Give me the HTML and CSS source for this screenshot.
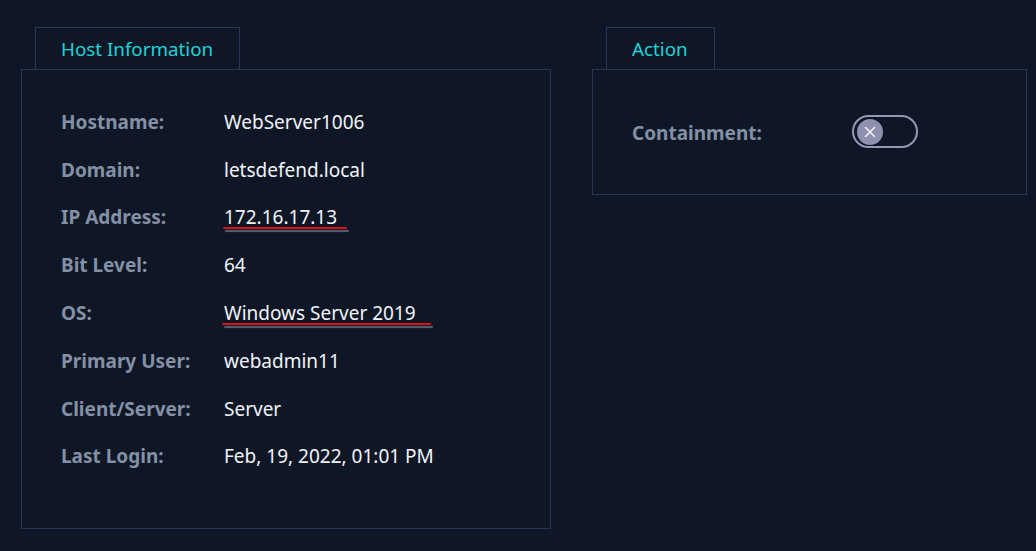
FILE: index.html
```html
<!DOCTYPE html>
<html>
<head>
<meta charset="utf-8">
<link rel="stylesheet" href="styles.css">
</head>
<body>
<div class="page">
  <section class="card card-host">
    <div class="tab">Host Information</div>
    <div class="panel panel-host">
      <div class="row"><span class="label">Hostname:</span><span class="value">WebServer1006</span></div>
      <div class="row"><span class="label">Domain:</span><span class="value">letsdefend.local</span></div>
      <div class="row"><span class="label">IP Address:</span><span class="value"><span class="mark mark-ip">172.16.17.13</span></span></div>
      <div class="row"><span class="label">Bit Level:</span><span class="value">64</span></div>
      <div class="row"><span class="label">OS:</span><span class="value"><span class="mark mark-os">Windows Server 2019</span></span></div>
      <div class="row"><span class="label">Primary User:</span><span class="value">webadmin11</span></div>
      <div class="row"><span class="label">Client/Server:</span><span class="value">Server</span></div>
      <div class="row"><span class="label">Last Login:</span><span class="value">Feb, 19, 2022, 01:01 PM</span></div>
    </div>
  </section>
  <section class="card card-action">
    <div class="tab tab-action">Action</div>
    <div class="panel panel-action">
      <div class="action-row">
        <span class="label label-action">Containment:</span>
        <span class="toggle"><span class="knob"><svg width="14" height="14" viewBox="0 0 14 14"><path d="M2.5 2.5 L11.5 11.5 M11.5 2.5 L2.5 11.5" stroke="#eef0f6" stroke-width="1.6" stroke-linecap="round" fill="none"/></svg></span></span>
      </div>
    </div>
  </section>
</div>
</body>
</html>
```
FILE: styles.css
```css
html, body {
  margin: 0;
  padding: 0;
  background: #0f1726;
  height: 100%;
}
body {
  font-family: "Noto Sans", "Open Sans", sans-serif;
  color: #eef1f5;
}
.page {
  display: flex;
  gap: 41px;
  padding: 27px 0 0 21px;
  align-items: flex-start;
}
.card {
  display: flex;
  flex-direction: column;
}
.card-host { width: 530px; }
.card-action { width: 435px; }
.tab {
  box-sizing: border-box;
  margin-left: 14px;
  width: 205px;
  height: 42px;
  border: 1px solid #27375a;
  border-bottom: none;
  color: #1fd3d9;
  font-size: 18.8px;
  line-height: 42px;
  padding-left: 25px;
}
.tab-action {
  width: 109px;
}
.panel {
  box-sizing: border-box;
  border: 1px solid #253553;
}
.panel-host {
  height: 460px;
  padding: 28px 0 0 39px;
}
.row {
  display: flex;
  height: 47.8px;
  align-items: center;
  font-size: 19px;
}
.label {
  color: #8390a5;
  font-weight: 700;
  width: 163px;
  flex: none;
}
.value {
  color: #f1f3f7;
}
.mark {
  position: relative;
  display: inline-block;
  line-height: 22px;
}
.mark::after {
  content: "";
  position: absolute;
  left: -1px;
  right: -10px;
  bottom: -1px;
  height: 2px;
  background: #e0101a;
  box-shadow: 2px 3px 1px rgba(120, 125, 135, 0.75);
  border-radius: 1px;
}
.mark-os::after { right: -15px; left: -2px; }
.panel-action {
  height: 126px;
  padding: 45px 0 0 39px;
}
.action-row {
  display: flex;
  align-items: center;
}
.label-action {
  width: 220px;
  font-size: 19px;
  padding-top: 3px;
}
.toggle {
  box-sizing: border-box;
  width: 66px;
  height: 33px;
  border: 2px solid #9597b6;
  border-radius: 17px;
  display: flex;
  align-items: center;
  padding-left: 3px;
}
.knob {
  width: 26px;
  height: 26px;
  border-radius: 50%;
  background: #8e90ae;
  display: flex;
  align-items: center;
  justify-content: center;
}
```
